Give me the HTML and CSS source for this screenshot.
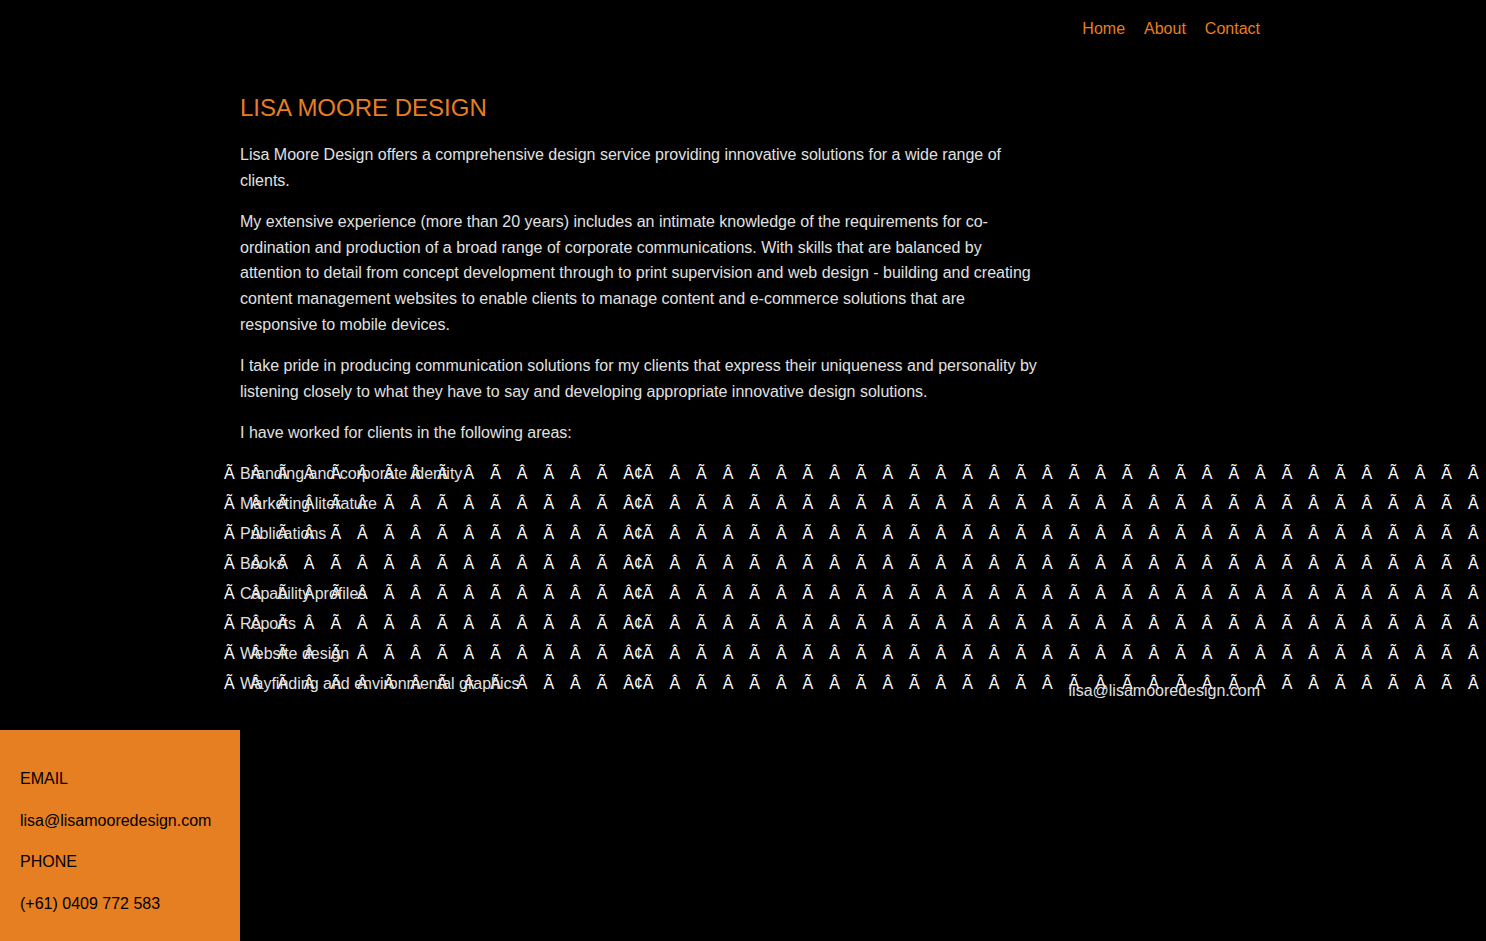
FILE: index.html
```html
<!DOCTYPE html>
<html lang="en">
<head>
<meta charset="utf-8">
<title>Lisa Moore Design</title>
<link rel="stylesheet" href="styles.css">
</head>
<body>
<div class="page">
  <header class="topbar">
    <nav class="nav">
      <a class="nav-link" href="#">Home</a>
      <a class="nav-link" href="#">About</a>
      <a class="nav-link" href="#">Contact</a>
    </nav>
  </header>

  <main class="main">
    <h1 class="title">LISA MOORE DESIGN</h1>
    <p class="text">Lisa Moore Design offers a comprehensive design service providing innovative solutions for a wide range of clients.</p>
    <p class="text">My extensive experience (more than 20 years) includes an intimate knowledge of the requirements for co-ordination and production of a broad range of corporate communications. With skills that are balanced by attention to detail from concept development through to print supervision and web design - building and creating content management websites to enable clients to manage content and e-commerce solutions that are responsive to mobile devices.</p>
    <p class="text">I take pride in producing communication solutions for my clients that express their uniqueness and personality by listening closely to what they have to say and developing appropriate innovative design solutions.</p>
    <p class="text">I have worked for clients in the following areas:</p>

    <div class="areas">
      <ul class="area-list">
        <li class="area"><span class="area-junk">Ã Â Ã Â Ã Â Ã Â Ã Â Ã Â Ã Â Ã Â¢Ã Â Ã Â Ã Â Ã Â Ã Â Ã Â Ã Â Ã Â Ã Â Ã Â Ã Â Ã Â Ã Â Ã Â Ã Â Ã Â Ã Â</span><span class="area-name">Branding and corporate identity</span></li>
        <li class="area"><span class="area-junk">Ã Â Ã Â Ã Â Ã Â Ã Â Ã Â Ã Â Ã Â¢Ã Â Ã Â Ã Â Ã Â Ã Â Ã Â Ã Â Ã Â Ã Â Ã Â Ã Â Ã Â Ã Â Ã Â Ã Â Ã Â Ã Â</span><span class="area-name">Marketing literature</span></li>
        <li class="area"><span class="area-junk">Ã Â Ã Â Ã Â Ã Â Ã Â Ã Â Ã Â Ã Â¢Ã Â Ã Â Ã Â Ã Â Ã Â Ã Â Ã Â Ã Â Ã Â Ã Â Ã Â Ã Â Ã Â Ã Â Ã Â Ã Â Ã Â</span><span class="area-name">Publications</span></li>
        <li class="area"><span class="area-junk">Ã Â Ã Â Ã Â Ã Â Ã Â Ã Â Ã Â Ã Â¢Ã Â Ã Â Ã Â Ã Â Ã Â Ã Â Ã Â Ã Â Ã Â Ã Â Ã Â Ã Â Ã Â Ã Â Ã Â Ã Â Ã Â</span><span class="area-name">Books</span></li>
        <li class="area"><span class="area-junk">Ã Â Ã Â Ã Â Ã Â Ã Â Ã Â Ã Â Ã Â¢Ã Â Ã Â Ã Â Ã Â Ã Â Ã Â Ã Â Ã Â Ã Â Ã Â Ã Â Ã Â Ã Â Ã Â Ã Â Ã Â Ã Â</span><span class="area-name">Capability profiles</span></li>
        <li class="area"><span class="area-junk">Ã Â Ã Â Ã Â Ã Â Ã Â Ã Â Ã Â Ã Â¢Ã Â Ã Â Ã Â Ã Â Ã Â Ã Â Ã Â Ã Â Ã Â Ã Â Ã Â Ã Â Ã Â Ã Â Ã Â Ã Â Ã Â</span><span class="area-name">Reports</span></li>
        <li class="area"><span class="area-junk">Ã Â Ã Â Ã Â Ã Â Ã Â Ã Â Ã Â Ã Â¢Ã Â Ã Â Ã Â Ã Â Ã Â Ã Â Ã Â Ã Â Ã Â Ã Â Ã Â Ã Â Ã Â Ã Â Ã Â Ã Â Ã Â</span><span class="area-name">Website design</span></li>
        <li class="area"><span class="area-junk">Ã Â Ã Â Ã Â Ã Â Ã Â Ã Â Ã Â Ã Â¢Ã Â Ã Â Ã Â Ã Â Ã Â Ã Â Ã Â Ã Â Ã Â Ã Â Ã Â Ã Â Ã Â Ã Â Ã Â Ã Â Ã Â</span><span class="area-name">Wayfinding and environmental graphics</span></li>
      </ul>
      <a class="footer-email" href="#">lisa@lisamooredesign.com</a>
    </div>
  </main>

  <aside class="contact-box">
    <p class="contact-line">EMAIL</p>
    <p class="contact-line">lisa@lisamooredesign.com</p>
    <p class="contact-line">PHONE</p>
    <p class="contact-line">(+61) 0409 772 583</p>
  </aside>
</div>
</body>
</html>
```

FILE: styles.css
```css
html, body {
  margin: 0;
  padding: 0;
  background: #000;
}

body {
  font-family: "Liberation Sans", Arial, Helvetica, sans-serif;
  font-size: 16px;
  color: #e0e0e0;
}

.page {
  overflow: hidden;
  min-height: 941px;
}

.topbar {
  display: flex;
  justify-content: flex-end;
  padding: 19px 226px 0 0;
}

.nav {
  display: flex;
  gap: 19px;
}

.nav-link {
  color: #e67e22;
  text-decoration: none;
  line-height: 20px;
  font-size: 16px;
}

.main {
  padding: 55px 0 0 240px;
  width: 1020px;
}

.title {
  margin: 0 0 20px;
  font-size: 24px;
  line-height: 28px;
  font-weight: normal;
  color: #e67e22;
}

.text {
  margin: 0 0 16px;
  max-width: 800px;
  line-height: 1.6;
}

.areas {
  display: grid;
  grid-template-columns: minmax(0, 1fr);
  margin-top: -3px;
}

.area-list {
  grid-area: 1 / 1;
  list-style: none;
  margin: 0;
  padding: 0;
}

.area {
  display: grid;
  grid-template-columns: minmax(0, 1fr);
  line-height: 30px;
  height: 30px;
}

.area-junk,
.area-name {
  grid-area: 1 / 1;
  white-space: nowrap;
}

.area-junk {
  margin-left: -16px;
  color: #fff;
  word-spacing: 11.5px;
}

.area-name {
  color: #e0e0e0;
}

.footer-email {
  grid-area: 1 / 1;
  justify-self: end;
  align-self: end;
  margin-bottom: -2px;
  line-height: 20px;
  color: #e0e0e0;
  text-decoration: none;
}

.contact-box {
  margin-top: 31px;
  width: 200px;
  padding: 20px;
  background: #e67e22;
  color: #000;
}

.contact-line {
  margin: 16px 0;
  line-height: 1.6;
}
```
